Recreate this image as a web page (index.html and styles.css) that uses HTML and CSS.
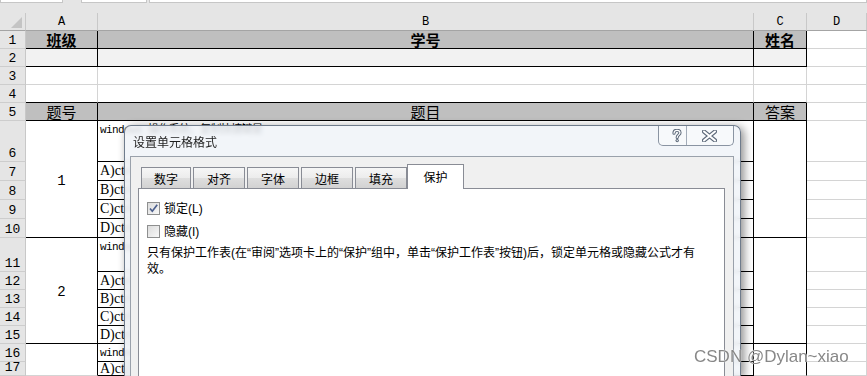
FILE: index.html
```html
<!DOCTYPE html>
<html lang="zh-CN">
<head>
  <meta charset="UTF-8" />
  <title>设置单元格格式</title>
  <link rel="stylesheet" href="styles.css">
</head>
<body>
<div class="topbar">
  <div class="box box-name"></div>
  <div class="box box-fx"></div>
  <div class="box box-formula"></div>
</div>

<div class="sheet">
  <div class="ch corner"><span class="tri"></span></div>
  <div class="ch">A</div>
  <div class="ch">B</div>
  <div class="ch">C</div>
  <div class="ch">D</div>

  <div class="rh">1</div>
  <div class="t head bold bb br">班级</div>
  <div class="t head bold bb br">学号</div>
  <div class="t head bold bb br">姓名</div>
  <div></div>

  <div class="rh">2</div>
  <div class="light bb br"></div>
  <div class="light bb br"></div>
  <div class="light bb br"></div>
  <div></div>

  <div class="rh">3</div>
  <div></div>
  <div></div>
  <div></div>
  <div></div>

  <div class="rh">4</div>
  <div class="bb"></div>
  <div class="bb"></div>
  <div class="bb"></div>
  <div></div>

  <div class="rh">5</div>
  <div class="t head bb br">题号</div>
  <div class="t head bb br">题目</div>
  <div class="t head bb br">答案</div>
  <div></div>

  <div class="rh">6</div>
  <div class="num span5 bb br">1</div>
  <div class="q bb br">windows 操作系统，复制快捷键是</div>
  <div class="span5 bb br"></div>
  <div></div>
  <div class="rh">7</div>
  <div class="ans bb br">A)ctrl+c</div>
  <div></div>
  <div class="rh">8</div>
  <div class="ans bb br">B)ctrl+v</div>
  <div></div>
  <div class="rh">9</div>
  <div class="ans bb br">C)ctrl+x</div>
  <div></div>
  <div class="rh">10</div>
  <div class="ans bb br">D)ctrl+a</div>
  <div></div>

  <div class="rh">11</div>
  <div class="num span5 bb br">2</div>
  <div class="q bb br">windows 操作系统，粘贴快捷键是</div>
  <div class="span5 bb br"></div>
  <div></div>
  <div class="rh">12</div>
  <div class="ans bb br">A)ctrl+c</div>
  <div></div>
  <div class="rh">13</div>
  <div class="ans bb br">B)ctrl+v</div>
  <div></div>
  <div class="rh">14</div>
  <div class="ans bb br">C)ctrl+x</div>
  <div></div>
  <div class="rh">15</div>
  <div class="ans bb br">D)ctrl+a</div>
  <div></div>

  <div class="rh">16</div>
  <div class="num span2 br"></div>
  <div class="q bb br">windows 操作系统，剪切快捷键是</div>
  <div class="span2 br"></div>
  <div></div>
  <div class="rh">17</div>
  <div class="ans bb br">A)ctrl+c</div>
  <div></div>
</div>

<div class="dialog">
  <div class="dlg-title">
    <span class="dlg-caption">设置单元格格式</span>
    <div class="dlg-buttons">
      <span class="btn-help">
        <svg width="10" height="14" viewBox="0 0 10 14">
          <path d="M2 4.2 C2 2.2 3.4 1.3 5 1.3 C6.8 1.3 8 2.4 8 3.8 C8 5.8 5.2 6 5.2 8.4" fill="none" stroke="#5e6a7a" stroke-width="3.2" stroke-linecap="round"/>
          <circle cx="5.2" cy="11.6" r="1.7" fill="#5e6a7a"/>
          <path d="M2 4.2 C2 2.2 3.4 1.3 5 1.3 C6.8 1.3 8 2.4 8 3.8 C8 5.8 5.2 6 5.2 8.4" fill="none" stroke="#fff" stroke-width="1.2" stroke-linecap="round"/>
          <circle cx="5.2" cy="11.6" r="0.7" fill="#fff"/>
        </svg>
      </span>
      <span class="btn-close">
        <svg width="15" height="12" viewBox="0 0 15 12">
          <path d="M2 1.5 L13 10.5 M13 1.5 L2 10.5" stroke="#5e6a7a" stroke-width="4.2" stroke-linecap="round"/>
          <path d="M2 1.5 L13 10.5 M13 1.5 L2 10.5" stroke="#fff" stroke-width="2" stroke-linecap="round"/>
        </svg>
      </span>
    </div>
  </div>
  <div class="dlg-body">
    <div class="tabs">
      <span class="tab tab-first">数字</span>
      <span class="tab">对齐</span>
      <span class="tab">字体</span>
      <span class="tab">边框</span>
      <span class="tab">填充</span>
      <span class="tab active">保护</span>
    </div>
    <div class="panel">
      <div class="chk-row">
        <span class="chk">
          <svg width="11" height="11" viewBox="0 0 11 11"><path d="M2 5.5 L4.3 8.2 L9.2 1.8" fill="none" stroke="#4c5f8d" stroke-width="1.7"/></svg>
        </span>
        <span class="chk-label">锁定(L)</span>
      </div>
      <div class="chk-row">
        <span class="chk"></span>
        <span class="chk-label">隐藏(I)</span>
      </div>
      <p class="note">只有保护工作表(在“审阅”选项卡上的“保护”组中，单击“保护工作表”按钮)后，锁定单元格或隐藏公式才有<br>效。</p>
    </div>
  </div>
</div>

<div class="watermark">CSDN @Dylan~xiao</div>
</body>
</html>
```

FILE: styles.css
```css
* { box-sizing: border-box; }
html, body { margin:0; padding:0; background:#fff; overflow:hidden; }
body { width:867px; height:376px; position:relative; font-family:"Noto Sans CJK SC", sans-serif; color:#000; }

/* formula bar strip */
.topbar { height:13px; background:#e5e5e5; display:flex; }
.box { height:3px; background:#fff; border:1px solid #c6c6c6; border-top:none; }
.box-name { width:63px; }
.box-fx { width:66px; margin-left:18px; }
.box-formula { flex:1; margin-left:2px; }

/* grid */
.sheet {
  display:grid;
  grid-template-columns:26px 72px 656px 53px 1fr;
  grid-template-rows:18px repeat(5, 18px) 41px repeat(4, 19px) 34px repeat(5, 18px) 14px;
}
.sheet > div {
  border-right:1px solid #d4d4d4; border-bottom:1px solid #d4d4d4;
  overflow:hidden; white-space:nowrap;
}
.sheet > .ch {
  background:#e5e5e5; border-right-color:#c8c8c8; border-bottom-color:#a4a4a4;
  display:flex; align-items:center; justify-content:center;
  font:12px/13px "Liberation Mono", monospace; padding-top:2px;
}
.sheet > .corner { justify-content:flex-end; align-items:flex-end; padding:0 3px 2px 0; }
.tri { width:0; height:0; border-left:11px solid transparent; border-bottom:11px solid #c4c4c4; }
.sheet > .rh {
  background:#e5e5e5; border-right-color:#c8c8c8; border-bottom-color:#cdcdcd;
  display:flex; align-items:flex-end; justify-content:center;
  font:13px/13px "Liberation Mono", monospace; padding-bottom:1px;
}

.sheet > .t { display:flex; align-items:center; justify-content:center; font-size:15px; line-height:15px; overflow:visible; }
.bold { font-weight:700; }
.sheet > .head { background:#bfbfbf; }
.sheet > .light { background:#f2f2f2; }
.sheet > .bb { border-bottom-color:#000; }
.sheet > .br { border-right-color:#000; }
.span5 { grid-row:span 5; }
.span2 { grid-row:span 2; }

.num { display:flex; align-items:center; justify-content:center; font:14px "Liberation Mono", monospace; padding-top:3px; }
.q { font:11px/12px "Liberation Mono", "Noto Sans CJK SC", monospace; letter-spacing:-0.6px; padding:3px 0 0 2px; }
.ans { display:flex; align-items:center; font:14px "Liberation Serif", serif; padding-left:2px; }

/* dialog */
.dialog {
  position:absolute; left:124px; top:125px; width:617px; height:251px;
  border:1px solid #6f7c8c; border-bottom:none; border-radius:7px 7px 0 0;
  background:rgba(240,243,248,0.86);
  backdrop-filter:blur(2px);
  box-shadow:3px 2px 10px rgba(0,0,0,0.45);
  padding:0 6px 0 5px;
  display:flex; flex-direction:column;
  font:12px "Liberation Sans", "Noto Sans CJK SC", sans-serif;
}
.dlg-title { height:30px; display:flex; align-items:center; flex:none; }
.dlg-caption { padding-left:3px; padding-top:1px; color:#1e1e1e; }
.dlg-buttons {
  margin-left:auto; align-self:flex-start; display:flex; height:20px;
  border:1px solid #8a94a2; border-top:none; border-radius:0 0 5px 5px;
  background:rgba(255,255,255,0.35);
}
.btn-help { width:28px; border-right:1px solid #a3acb8; display:flex; align-items:center; justify-content:center; padding-left:8px; }
.btn-close { width:46px; display:flex; align-items:center; justify-content:center; padding-right:2px; }

.dlg-body { flex:1; background:#f0f0f0; border:1px solid #9aa1ab; border-bottom:none; padding:7px 8px 0 7px; display:flex; flex-direction:column; }
.tabs { height:24px; display:flex; align-items:flex-end; gap:2px; padding-left:3px; flex:none; }
.tab {
  width:52px; height:21px; border:1px solid #898c95; border-bottom:none;
  background:linear-gradient(#f6f6f6, #ececec 50%, #dedede 52%, #d2d2d2);
  display:flex; align-items:center; justify-content:center; padding-top:1px;
}
.tab-first { width:50px; }
.tab.active {
  width:57px; height:25px; margin-left:-2px; margin-bottom:-1px;
  background:#fff; position:relative; z-index:1; padding-bottom:3px;
}
.panel { flex:1; background:#fff; border:1px solid #898c95; border-bottom:none; padding:13px 8px 0 8px; }

.chk-row { display:flex; align-items:center; height:13px; }
.chk-row + .chk-row { margin-top:10px; }
.chk {
  width:13px; height:13px; border:1px solid #8e8f8f;
  background:linear-gradient(135deg, #dcdcdc, #f8f8f8);
  display:flex; align-items:center; justify-content:center;
}
.chk-label { margin-left:4px; padding-top:1px; line-height:13px; }
.note { margin:7px 0 0; line-height:16px; white-space:nowrap; }

.watermark {
  position:absolute; left:694px; top:348px;
  font:17px/17px "Liberation Sans", sans-serif;
  color:rgba(105,105,105,0.8);
  text-shadow:0 0 1px #fff, 0 0 1px #fff;
}
```
